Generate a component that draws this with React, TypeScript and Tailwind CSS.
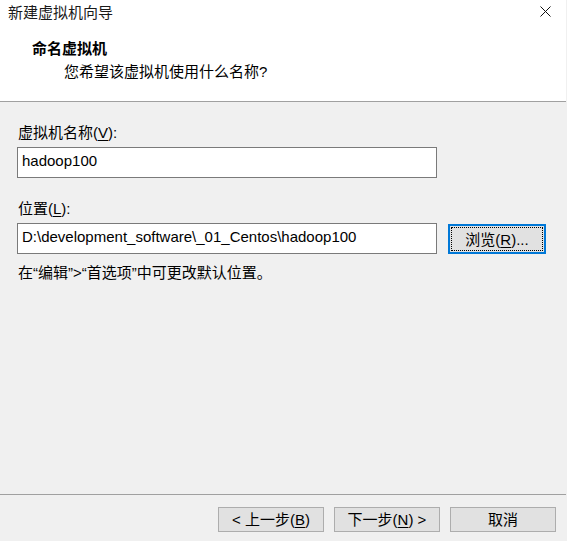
import React from "react"

const font = { fontFamily: '"Liberation Sans", "Noto Sans CJK SC", sans-serif' }

function Btn({ children }: { children: React.ReactNode }) {
  return (
    <button className="w-[106px] h-[25px] border border-[#adadad] bg-[#e1e1e1] text-[15px] leading-none text-black flex items-center justify-center">
      {children}
    </button>
  )
}

export default function App() {
  return (
    <div className="w-[567px] h-[541px] bg-[#f0f0f0] flex flex-col text-black antialiased" style={font}>
      {/* Header */}
      <div className="h-[102px] bg-white border-b border-[#a0a0a0] w-[566px]">
        <div className="flex items-center justify-between h-[24px] pl-[8px] pr-[15px]">
          <span className="text-[15px] leading-none text-[#1a1a1a]">新建虚拟机向导</span>
          <svg width="11" height="11" viewBox="0 0 11 11" className="mt-[-1px]">
            <path d="M0.5 0.5 L10.5 10.5 M10.5 0.5 L0.5 10.5" stroke="#111" strokeWidth="1" />
          </svg>
        </div>
        <div className="pl-[32px] mt-[15px] text-[15px] leading-[20px] font-bold">命名虚拟机</div>
        <div className="pl-[64px] mt-[3px] text-[15px] leading-[20px]">您希望该虚拟机使用什么名称?</div>
      </div>

      {/* Body */}
      <div className="px-[17px] pt-[21px] flex flex-col">
        <label className="text-[15px] leading-[20px] pl-px">
          虚拟机名称(<span className="underline underline-offset-2">V</span>):
        </label>
        <div className="mt-[4px] w-[420px] h-[31px] bg-white border border-[#7a7a7a] px-[4px] pt-[2px] text-[15px] leading-[22px]">
          hadoop100
        </div>

        <label className="mt-[21px] text-[15px] leading-[20px] pl-px">
          位置(<span className="underline underline-offset-2">L</span>):
        </label>
        <div className="mt-[4px] flex items-center gap-[11px]">
          <div className="w-[420px] h-[31px] bg-white border border-[#7a7a7a] px-[4px] pt-[2px] text-[15px] leading-[22px] whitespace-nowrap overflow-hidden">
            D:\development_software\_01_Centos\hadoop100
          </div>
          <button className="w-[98px] h-[30px] mt-[1px] border-2 border-[#0078d7] bg-[#e1e1e1] p-px">
            <div className="w-full h-full border border-dotted border-black flex items-center justify-center text-[15px] leading-none">
              浏览(<span className="underline underline-offset-2">R</span>)...
            </div>
          </button>
        </div>
        <p className="mt-[9px] text-[15px] leading-[20px] pl-px">在“编辑”&gt;“首选项”中可更改默认位置。</p>
      </div>

      <div className="flex-1" />

      {/* Footer */}
      <div className="w-[566px] h-px bg-[#a0a0a0]" />
      <div className="h-[46px] flex justify-end gap-[10px] pr-[11px] pt-[12px]">
        <Btn>
          &lt; 上一步(<span className="underline underline-offset-2">B</span>)
        </Btn>
        <Btn>
          下一步(<span className="underline underline-offset-2">N</span>) &gt;
        </Btn>
        <Btn>取消</Btn>
      </div>
    </div>
  )
}
